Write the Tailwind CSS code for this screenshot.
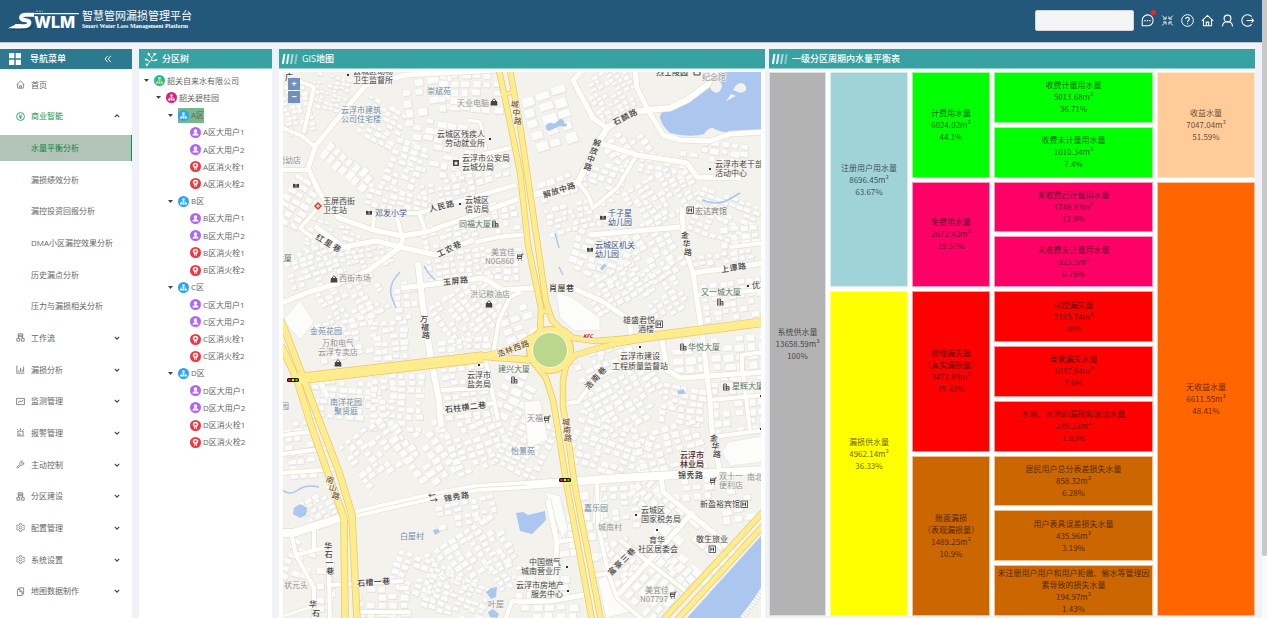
<!DOCTYPE html>
<html lang="zh-CN">
<head>
    <meta charset="UTF-8">
    <meta name="viewport" content="width=device-width, initial-scale=1.0">
    <title>智慧管网漏损管理平台</title>
    <script src="https://cdn.jsdelivr.net/npm/@tailwindcss/browser@4"></script>
</head>
<body class="flex h-screen overflow-hidden bg-[#f0f2f7] font-['Open_Sans','Noto_Sans_CJK_SC',sans-serif] text-[8px] leading-[12px] text-[#666]">

    <!-- icon set -->
    <svg class="hidden">
        <defs>
            <symbol id="i-home" viewBox="0 0 16 16"><path d="M1 8.5 8 1.8l7 6.7M3 7v7.5h10V7M6.5 14.5V10h3v4.5" fill="none" stroke="currentColor" stroke-width="1.3"/></symbol>
            <symbol id="i-money" viewBox="0 0 16 16"><circle cx="8" cy="8" r="7" fill="none" stroke="currentColor" stroke-width="1.4"/><path d="M5.5 4 8 7.500l2.500-3.500M5.500 8h5M5.500 10.200h5M8 8v4.500" fill="none" stroke="currentColor" stroke-width="1.1"/></symbol>
            <symbol id="i-flow" viewBox="0 0 16 16"><path d="M4 1.500h8v5H4zM4 4h8M4.500 6.500V9M11.500 6.500V9M1.500 9.500h5v5h-5zM9.500 9.500h5v5h-5z" fill="none" stroke="currentColor" stroke-width="1.3"/></symbol>
            <symbol id="i-bar" viewBox="0 0 16 16"><path d="M1.500 1v13.500H15M5 12V9M8 12V5M11 12V8M13.500 12V3" fill="none" stroke="currentColor" stroke-width="1.4"/></symbol>
            <symbol id="i-line" viewBox="0 0 16 16"><path d="M1 2.500h14v11H1zM3.500 10.500 6.500 7l2.500 2 4-4" fill="none" stroke="currentColor" stroke-width="1.3"/></symbol>
            <symbol id="i-alarm" viewBox="0 0 16 16"><path d="M3.500 13V5.500h9V13M1.500 14h13M8 .5v3M2 2l1.500 1.500M14 2l-1.500 1.500M7 9v4" fill="none" stroke="currentColor" stroke-width="1.400"/></symbol>
            <symbol id="i-tool" viewBox="0 0 16 16"><path d="M10 2a4 4 0 0 0-3 5.500L1.500 13l1.500 1.500L8.500 9A4 4 0 0 0 14 5l-2.500 1.500L9.500 5 12 2.200z" fill="none" stroke="currentColor" stroke-width="1.300"/></symbol>
            <symbol id="i-gear" viewBox="0 0 16 16"><path d="m6.500 1.200h3l.6 2 2 1.100 2-.5 1.400 2.500-1.400 1.700 1.400 1.800-1.400 2.500-2-.5-2 1.100-.6 2h-3l-.6-2-2-1.100-2 .5L.5 9.800 1.900 8 .5 6.300l1.400-2.500 2 .5 2-1.100z" fill="none" stroke="currentColor" stroke-width="1.200"/><circle cx="8" cy="8" r="2.500" fill="none" stroke="currentColor" stroke-width="1.200"/></symbol>
            <symbol id="i-copy" viewBox="0 0 16 16"><path d="M5 4V1.500h8.500v11H11M2.500 4.500H7l4 4v6.500H2.500zM7 4.500V8.500h4" fill="none" stroke="currentColor" stroke-width="1.300"/></symbol>
            <symbol id="i-down" viewBox="0 0 16 16"><path d="m2 5 6 6 6-6" fill="none" stroke="currentColor" stroke-width="3"/></symbol>
            <symbol id="i-up" viewBox="0 0 16 16"><path d="m2 11 6-6 6 6" fill="none" stroke="currentColor" stroke-width="3"/></symbol>
            <symbol id="i-org" viewBox="0 0 16 16"><circle cx="8" cy="8" r="8" fill="currentColor"/><path d="M8 6v3M4.500 11V8.700h7V11M8 9v2" fill="none" stroke="#fff" stroke-width="1"/><path d="M6.300 3.500h3.400v3H6.300zM3 10h3v2.500H3zM6.600 10h2.800v2.500H6.600zM10 10h3v2.500h-3z" fill="#fff"/></symbol>
            <symbol id="i-company" viewBox="0 0 16 16"><circle cx="8" cy="8" r="8" fill="currentColor"/><path d="M8 6v3M4.500 11V8.700h7V11M8 9v2" fill="none" stroke="#ffd83a" stroke-width="1"/><path d="M6 3h4v3.500H6zM3 10h3v2.800H3zM6.600 10h2.800v2.800H6.600zM10 10h3v2.800h-3z" fill="#ffd83a"/></symbol>
            <symbol id="i-user" viewBox="0 0 16 16"><circle cx="8" cy="8" r="8" fill="currentColor"/><path d="M5.500 5.700a2.500 2.500 0 0 1 5 0c0 2-1.200 3-2.500 3s-2.500-1-2.500-3zM3.500 12.500c0-2.500 2-3.300 4.500-3.300s4.500.8 4.500 3.300z" fill="#fff"/></symbol>
            <symbol id="i-hydrant" viewBox="0 0 16 16"><circle cx="8" cy="8" r="8" fill="currentColor"/><path d="M8 2.500c2.500 0 4 1.600 4 3.600 0 1.800-1.200 2.800-2 3.700v3H6v-3C5.200 8.900 4 7.900 4 6.100c0-2 1.500-3.600 4-3.600z" fill="#fff"/><circle cx="8" cy="6.500" r="1.600" fill="currentColor"/><path d="M8 10v3" stroke="currentColor" stroke-width="1"/></symbol>
            <symbol id="i-bars" viewBox="0 0 16 12"><path d="M2.500 1 .8 11" stroke="#fff" stroke-width="2"/><path d="M6.600 1 4.900 11" stroke="#fff" stroke-width="2" opacity=".85"/><path d="M10.700 1 9 11" stroke="#fff" stroke-width="2" opacity=".6"/><path d="M14.800 1 13.100 11" stroke="#fff" stroke-width="2" opacity=".4"/></symbol>
        </defs>
    </svg>

    <div class="flex min-w-0 flex-1 flex-col">
        <header class="flex h-[43px] shrink-0 items-center justify-between border-b border-[#b9c7d4] bg-[#24587a] px-2 pb-0.5">
            <div class="flex items-center gap-0.5 text-white">
                <svg class="h-[22px] w-[72px]" viewBox="0 0 72 22">
                    <path d="M1 20.500h17q6 0 7-5" fill="none" stroke="#153d58" stroke-width="1.500" opacity=".6"/>
                    <path d="M14 4h57v1.200H25z" fill="#fff"/>
                    <path d="M26 5.800H18q-4.500 0-5 2.700-.3 2.300 4.500 2.700 4.500.4 3.800 3-.8 3-5.300 3H7" fill="none" stroke="#fff" stroke-width="4"/>
                    <path d="M0 19.200 8 15.200h5v4z" fill="#fff"/>
                    <path d="M28 2.200h2M31 2.200h2M34 2.200h1" stroke="#fff" stroke-width=".8" opacity=".7"/>
                    <text x="26" y="19" font-size="16" font-weight="800" fill="#fff" font-family="Inter, sans-serif">WLM</text>
                </svg>
                <div class="flex flex-col">
                    <h1 class="text-[11px] leading-[12px]">智慧管网漏损管理平台</h1>
                    <p class="font-['Liberation_Serif',serif] text-[6px] font-bold leading-[8px]">Smart Water Loss Management Platform</p>
                </div>
            </div>
            <div class="flex items-center gap-[7px] text-white">
                <input type="search" aria-label="搜索" class="h-[21px] w-[99px] rounded-[2px] border border-[#cfd6dc] bg-[#f5f5f5] px-1 text-[#333] outline-none">
                <button class="relative" aria-label="消息">
                    <svg class="size-[13px]" viewBox="0 0 16 16"><path d="M1.500 14.500V8A6.700 6.700 0 1 1 8 14.500z" fill="none" stroke="currentColor" stroke-width="1.300"/><path d="M4.200 7.300h1.600v1.600H4.200zM7.200 7.300h1.600v1.600H7.200zM10.200 7.300h1.600v1.600h-1.600z" fill="currentColor"/></svg>
                    <span class="absolute -right-0.5 -top-1 size-[5px] rounded-full bg-[#f5222d]"></span>
                </button>
                <button aria-label="全屏"><svg class="size-[13px]" viewBox="0 0 16 16"><path d="m1.500 2 4 4M14.500 2l-4 4M1.500 14l4-4M14.500 14l-4-4M2.500 6.200h3.700V3M9.800 3v3.200h3.700M2.500 9.800h3.700V13M9.800 13V9.800h3.700" fill="none" stroke="currentColor" stroke-width="1.100"/></svg></button>
                <button aria-label="帮助"><svg class="size-[13px]" viewBox="0 0 16 16"><circle cx="8" cy="8" r="7.200" fill="none" stroke="currentColor" stroke-width="1.200"/><path d="M5.700 6.300C5.700 3.400 10.300 3.500 10.300 6.200 10.300 8 8 7.900 8 10M8 11.300v1.400" fill="none" stroke="currentColor" stroke-width="1.300"/></svg></button>
                <button aria-label="首页"><svg class="size-[13px]"><use href="#i-home"/></svg></button>
                <button aria-label="用户"><svg class="size-[13px]" viewBox="0 0 16 16"><circle cx="8" cy="5.500" r="4.200" fill="none" stroke="currentColor" stroke-width="1.400"/><path d="M1.800 15.300C2 11.500 4.500 9.600 8 9.600s6 1.900 6.200 5.700" fill="none" stroke="currentColor" stroke-width="1.400"/></svg></button>
                <button aria-label="退出"><svg class="size-[13px]" viewBox="0 0 16 16"><path d="M13.200 3.300a7 7 0 1 0 0 9.400M7 8h8.500M13 5.500 15.500 8 13 10.500" fill="none" stroke="currentColor" stroke-width="1.300"/></svg></button>
            </div>
        </header>

        <main class="flex min-h-0 flex-1 gap-[7px] pr-[7px] pt-[6px]">
            <!-- navigation -->
            <aside class="w-[132px] shrink-0 overflow-hidden bg-white">
                <div class="flex h-5 items-center bg-[#2c7a90] pl-[9px] text-white">
                    <svg class="size-3" viewBox="0 0 12 12"><path d="M0 0h5.300v5.300H0zM6.700 0H12v5.300H6.700zM0 6.700h5.300V12H0zM6.700 6.700H12V12H6.700z" fill="#fff"/></svg>
                    <h2 class="ml-[9px] flex-1 text-[9px] font-medium">导航菜单</h2>
                    <button class="mr-5" aria-label="收起菜单"><svg class="size-2" viewBox="0 0 8 8"><path d="M3.800.8 1 4l2.800 3.200M7 .8 4.200 4 7 7.200" fill="none" stroke="#fff" stroke-width=".9"/></svg></button>
                </div>
                <nav id="menu" class="grid h-[538px] auto-rows-fr"></nav>
            </aside>

            <!-- zone tree -->
            <section class="w-[133px] shrink-0 overflow-hidden bg-white">
                <div class="flex h-5 items-center border-b border-[#8fd0d0] bg-[#38a2a3] pl-[5px] text-white">
                    <svg class="h-4 w-[14px]" viewBox="0 0 14 16"><path d="M3 15c1-2 1.500-3 3-4.500S8 8 8 6.500L10 4M6 10.500 3 9M8 7 5 4M7 9l4 1" fill="none" stroke="#fff" stroke-width=".8"/><path d="M4 1.500 6.500 3 5.500 5 3.500 4zM9.500 2l3 .5L11 4.500 9.300 4zM.5 7.500l3 .5L4 9.500l-2.500 0zM10.500 8.500l3-.5-1 2-2 .3zM1.500 12.500l2.500.5-1.500 2.500z" fill="#fff"/></svg>
                    <h2 class="ml-1 text-[9px] font-medium">分区树</h2>
                </div>
                <ul id="tree" class="mt-[3px] grid h-[379px] auto-rows-fr"></ul>
            </section>

            <div class="grid min-w-0 flex-1 grid-cols-2 gap-1">
                <!-- map -->
                <section class="flex min-h-0 min-w-0 flex-col bg-white">
                    <div class="flex h-5 shrink-0 items-center gap-1 border-b border-[#8fd0d0] bg-[#38a2a3] pl-[3px] text-white">
                        <svg class="h-3 w-4"><use href="#i-bars"/></svg>
                        <h2 class="text-[9px] font-medium">GIS地图</h2>
                    </div>
                    <div class="relative mx-1 mt-[3px] min-h-0 flex-1 overflow-hidden bg-[#f4f2ed]">
                        <svg id="map" class="absolute inset-0 size-full" viewBox="283 72 478 546" preserveAspectRatio="xMidYMid slice">
                            <g id="buildings" stroke-width=".6"></g>
                            <g id="water" fill="#abc7ef">
                                <path d="M660 118Q660 112 667 108L687 101 707 89 716 72H762V130L733 133Q718 132 713 128 708 127 704 134 690 138 670 133 662 126 660 118z"/>
                                <path d="M546 125Q550 121 554 124L560 119Q565 119 564 123L567 124Q567 128 560 126L549 131Q545 130 546 125z"/>
                                <path d="M762 535 687 618H741L762 586z"/>
                                <path d="M516 513 523 512 528 515 545 511 546 520 532 534 520 531z"/>
                                <path d="M294 508 300 504 307 508 306 515 300 518 293 514z"/>
                                <path d="M433 530 438 529 440 532 435 535zM486 592 491 588 497 587 496 597 491 599zM488 612 493 609 499 614 497 618 490 617zM600 268 605 263 606 266 602 271zM677 391 684 389 685 394 678 394z"/>
                                <path d="M400 272Q387 285 392 298L396 308M424 266 429 274 435 280M555 233 559 248M559 267 563 275M702 200Q718 206 728 200L740 193M282 490Q290 496 298 490T319 487" fill="none" stroke="#abc7ef" stroke-width="1.500"/>
                                <path d="M714 92a6 6 0 1 1 8-5 14 14 0 0 0-2 4q-3 3-6 1zM733 90q4-8 9-7 5 2 4 7-3 4-8 2zM726 101l5-7 5 2z" fill="#f4f2ed"/>
                            </g>
                            <g id="streets" fill="none" stroke-linejoin="round"></g>
                            <circle cx="550" cy="350" r="24" fill="#e3c965"/>
                            <g id="avenues" fill="none" stroke-linejoin="round"></g>
                            <circle cx="550" cy="350" r="23" fill="#ffec8f"/>
                            <circle cx="550" cy="350" r="17.500" fill="#bbd78d" stroke="#fff9d8" stroke-width="1"/>
                            <g id="labels" font-family="Noto Sans CJK SC, sans-serif" font-size="8" paint-order="stroke" stroke="#f7f6f2" stroke-width="1.500" stroke-linejoin="round"></g>
                            <g id="pois"></g>
                        </svg>
                        <div class="absolute left-[5px] top-[6px] flex flex-col gap-px text-[9px] font-bold leading-[12px] text-white">
                            <button class="size-3 bg-[#7291ba]">+</button>
                            <button class="size-3 bg-[#7291ba]">−</button>
                        </div>
                    </div>
                </section>

                <!-- water balance -->
                <section class="min-w-0">
                    <div class="flex h-5 items-center gap-1 border-b border-[#8fd0d0] bg-[#38a2a3] pl-[3px] text-white">
                        <svg class="h-3 w-4"><use href="#i-bars"/></svg>
                        <h2 class="text-[9px] font-medium">一级分区周期内水量平衡表</h2>
                    </div>
                    <div class="overflow-hidden bg-white pt-[3px]">
                        <div class="-mx-1 -my-1">
                            <table class="h-[552px] w-full table-fixed border-separate border-spacing-1 text-center font-['Noto_Sans_CJK_SC',sans-serif] text-black/65 [text-spacing-trim:space-all] [&_td]:border [&_td]:border-white/60 [&_td]:p-0 [&_tr]:h-[50px]">
                                <colgroup>
                                    <col class="w-[57px]"><col class="w-[78px]"><col class="w-[78px]"><col class="w-[159px]"><col>
                                </colgroup>
                                <tbody>
                                    <tr>
                                        <td rowspan="10" class="bg-[#b3b3b3]">系统供水量<br>13658.59m³<br>100%</td>
                                        <td rowspan="4" class="bg-[#9fd3d8]">注册用户用水量<br>8696.45m³<br>63.67%</td>
                                        <td rowspan="2" class="bg-[#00ff00]">计费用水量<br>6024.02m³<br>44.1%</td>
                                        <td class="bg-[#00ff00]">收费计量用水量<br>5013.68m³<br>36.71%</td>
                                        <td rowspan="2" class="bg-[#ffcb99]">收益水量<br>7047.04m³<br>51.59%</td>
                                    </tr>
                                    <tr>
                                        <td class="bg-[#00ff00]">收费未计量用水量<br>1010.34m³<br>7.4%</td>
                                    </tr>
                                    <tr>
                                        <td rowspan="2" class="bg-[#ff0066]">免费用水量<br>2672.43m³<br>19.57%</td>
                                        <td class="bg-[#ff0066]">未收费已计量用水量<br>1748.93m³<br>12.8%</td>
                                        <td rowspan="8" class="bg-[#ff6600]">无收益水量<br>6611.55m³<br>48.41%</td>
                                    </tr>
                                    <tr>
                                        <td class="bg-[#ff0066]">未收费未计量用水量<br>923.5m³<br>6.76%</td>
                                    </tr>
                                    <tr>
                                        <td rowspan="6" class="bg-[#ffff00]">漏损供水量<br>4962.14m³<br>36.33%</td>
                                        <td rowspan="3" class="bg-[#ff0000]">物理漏失量<br>（真实漏损量）<br>3472.89m³<br>25.43%</td>
                                        <td class="bg-[#ff0000]">可控漏失量<br>2185.74m³<br>16%</td>
                                    </tr>
                                    <tr>
                                        <td class="bg-[#ff0000]">背景漏失水量<br>1037.84m³<br>7.6%</td>
                                    </tr>
                                    <tr>
                                        <td class="bg-[#ff0000]">水箱、水池的漏损和溢流水量<br>249.31m³<br>1.83%</td>
                                    </tr>
                                    <tr>
                                        <td rowspan="3" class="bg-[#cc6600]">账面漏损<br>（表观漏损量）<br>1489.25m³<br>10.9%</td>
                                        <td class="bg-[#cc6600]">居民用户总分表差损失水量<br>858.32m³<br>6.28%</td>
                                    </tr>
                                    <tr>
                                        <td class="bg-[#cc6600]">用户表具误差损失水量<br>435.96m³<br>3.19%</td>
                                    </tr>
                                    <tr>
                                        <td class="bg-[#cc6600]">未注册用户用户和用户拒缴、偷水等管理因素导致的损失水量<br>194.97m³<br>1.43%</td>
                                    </tr>
                                </tbody>
                            </table>
                        </div>
                    </div>
                </section>
            </div>
        </main>
    </div>

    <!-- page scroll track -->
    <div class="w-[5px] shrink-0 bg-[#fafafa]"><div class="h-[90%] rounded-b-[2px] bg-[#c9c9c9]"></div></div>

    <script>
        // ---------- navigation ----------
        const menu = [
            ['i-home', '首页'],
            ['i-money', '商业智能', 'open'],
            ['', '水量平衡分析', 'active'],
            ['', '漏损绩效分析'],
            ['', '漏控投资回报分析'],
            ['', 'DMA小区漏控效果分析'],
            ['', '历史漏点分析'],
            ['', '压力与漏损相关分析'],
            ['i-flow', '工作流', 'closed'],
            ['i-bar', '漏损分析', 'closed'],
            ['i-line', '监测管理', 'closed'],
            ['i-alarm', '报警管理', 'closed'],
            ['i-tool', '主动控制', 'closed'],
            ['i-flow', '分区建设', 'closed'],
            ['i-gear', '配置管理', 'closed'],
            ['i-gear', '系统设置', 'closed'],
            ['i-copy', '地图数据制作', 'closed'],
        ];
        document.getElementById('menu').innerHTML = menu.map(([icon, text, state]) => {
            const color = state === 'active' ? 'border-r border-[#0d9447] bg-[#b1c4b7] text-[#12813f]' :
                state === 'open' ? 'text-[#12914a]' : '';
            const arrow = state === 'open' ? 'i-up' : state === 'closed' ? 'i-down' : '';
            return `<a href="#" class="my-[3px] flex items-center pl-4 pr-3 ${color}">
                <span class="w-[15px] shrink-0">${icon ? `<svg class="size-[9px]"><use href="#${icon}"/></svg>` : ''}</span>
                <span class="flex-1 whitespace-nowrap">${text}</span>
                ${arrow ? `<svg class="size-[6px] text-[#444]"><use href="#${arrow}"/></svg>` : ''}</a>`;
        }).join('');

        // ---------- tree ----------
        const tree = [[0, 'i-company', '#12bdb9', '韶关自来水有限公司'], [1, 'i-org', '#d6217f', '韶关碧桂园']];
        for (const zone of ['A', 'B', 'C', 'D']) {
            tree.push([2, 'i-org', '#2fa4ee', zone + '区', zone === 'A']);
            for (const n of [1, 2]) tree.push([3, 'i-user', '#b265f5', `${zone}区大用户${n}`]);
            for (const n of [1, 2]) tree.push([3, 'i-hydrant', '#f5333f', `${zone}区消火栓${n}`]);
        }
        const indent = ['pl-[5px]', 'pl-[17px]', 'pl-[29px]', 'pl-[41px]'];
        document.getElementById('tree').innerHTML = tree.map(([level, icon, color, text, selected]) =>
            `<li class="flex items-center gap-[5px] ${indent[level]}">
                <span class="flex w-[5px] justify-center">${level < 3 ? '<svg class="h-[3px] w-[5px]" viewBox="0 0 5 3"><path d="M0 0h5L2.500 3z" fill="#444"/></svg>' : ''}</span>
                <button class="flex h-[15px] items-center gap-[2px] whitespace-nowrap ${selected ? 'bg-[#78b78c]' : ''}">
                    <svg class="size-[11px]" style="color:${color}"><use href="#${icon}"/></svg>${text}</button></li>`).join('');

        // ---------- map: buildings ----------
        let seed = 7;
        const rand = () => (seed = (seed * 16807) % 2147483647) / 2147483647;
        // centre x, centre y, width, height, angle, cell size
        const blocks = [
            [294, 108, 24, 50, -15, 7], [330, 92, 34, 36, 15, 6], [378, 120, 44, 40, 30, 8], [343, 165, 20, 50, -50, 11],
            [425, 100, 46, 46, -8, 13], [468, 92, 60, 40, 2, 11], [440, 145, 60, 50, 10, 11], [405, 165, 36, 50, 20, 9],
            [480, 170, 50, 26, -15, 9], [395, 200, 60, 24, 15, 8], [445, 190, 50, 22, -12, 8], [295, 200, 26, 50, 30, 10],
            [330, 238, 50, 34, 15, 7], [360, 255, 60, 24, -10, 7], [450, 230, 60, 20, -15, 8], [500, 215, 36, 30, -10, 9],
            [310, 268, 50, 40, -20, 8], [350, 300, 60, 44, -28, 8], [345, 335, 60, 34, -12, 9], [390, 340, 36, 40, -5, 9],
            [405, 300, 24, 40, -5, 9], [460, 262, 70, 26, -8, 8], [465, 312, 60, 50, -35, 8], [500, 262, 30, 30, 0, 9],
            [515, 325, 30, 36, -20, 12], [460, 345, 46, 14, -6, 9], [350, 400, 80, 40, 4, 9], [395, 400, 50, 56, 2, 9],
            [462, 390, 40, 50, -8, 9], [515, 395, 36, 50, 25, 12], [375, 450, 60, 50, -35, 9], [425, 450, 50, 60, -35, 11],
            [475, 440, 60, 60, -20, 9], [525, 445, 46, 60, 25, 8], [298, 450, 26, 60, -8, 10], [320, 505, 40, 26, -30, 8],
            [300, 560, 30, 40, 20, 10], [325, 585, 20, 50, 0, 10], [465, 512, 60, 26, -12, 9],
            [470, 555, 80, 50, -32, 9], [415, 575, 50, 40, 20, 9], [380, 600, 50, 30, 0, 11], [455, 595, 60, 40, 20, 8],
            [505, 570, 30, 34, -28, 8], [548, 115, 46, 50, -18, 16], [605, 95, 50, 46, -30, 7],
            [560, 185, 46, 20, -18, 10], [625, 145, 44, 30, -35, 9], [605, 170, 44, 30, 20, 9], [660, 165, 44, 24, 10, 8],
            [660, 195, 70, 44, -30, 8], [580, 215, 70, 30, -14, 8], [715, 150, 70, 20, 8, 10],
            [722, 215, 60, 44, 20, 8], [740, 240, 40, 30, -5, 10], [645, 255, 60, 60, -30, 9], [600, 255, 60, 40, 20, 10],
            [610, 290, 50, 34, -30, 8], [660, 290, 40, 50, -30, 8], [720, 260, 60, 16, -8, 8], [730, 298, 56, 36, -8, 9],
            [600, 360, 56, 22, -20, 9], [690, 355, 36, 34, -5, 12], [735, 350, 50, 30, -5, 12],
            [625, 400, 80, 50, -30, 9], [680, 405, 40, 40, 10, 9], [735, 385, 50, 20, 0, 9], [735, 415, 50, 30, -5, 12],
            [610, 445, 80, 50, 20, 9], [670, 450, 70, 50, -15, 10], [620, 505, 40, 40, -5, 10],
            [590, 530, 16, 80, -6, 14], [650, 505, 40, 50, -45, 10], [700, 485, 60, 20, -5, 11], [735, 510, 30, 26, -10, 12],
            [690, 545, 70, 50, 40, 16], [650, 580, 60, 50, -45, 11], [620, 560, 30, 40, -45, 9], [562, 530, 14, 50, -6, 12],
            [540, 585, 50, 20, 0, 11], [550, 610, 60, 14, 0, 12],
        ];
        let out = '';
        for (const [cx, cy, w, h, angle, cell] of blocks) {
            out += `<g transform="rotate(${angle} ${cx} ${cy})">`;
            for (let x = cx - w / 2; x < cx + w / 2; x += cell) {
                for (let y = cy - h / 2; y < cy + h / 2; y += cell * 0.75) {
                    if (rand() < 0.18) continue;
                    const bw = cell * (0.6 + rand() * 0.35), bh = cell * 0.75 * (0.6 + rand() * 0.3);
                    const bx = x + rand() * 2, by = y + rand() * 1.5;
                    out += `<rect x="${bx + 0.7}" y="${by + 0.9}" width="${bw}" height="${bh}" fill="#e0e0de"/>` +
                        `<rect x="${bx}" y="${by}" width="${bw}" height="${bh}" fill="#fcfcfb" stroke="#e9e8e5"/>`;
                }
            }
            out += '</g>';
        }
        // large single plots
        out += '<g fill="#fcfcfb" stroke="#e0e0de"><path d="M556 292 572 297 600 318V330L575 331 560 318z"/><path d="M283 320 300 300 314 322 300 340z"/><path d="M728 442 762 436V462L730 466 722 452z"/><path d="M545 492 560 496 568 530 562 538 552 510z"/><path d="M594 488 600 486 604 520 592 524z"/><path d="M606 575 616 598 630 612 606 618 598 580z"/><path d="M524 402 540 400 548 440 528 448z"/><path d="M322 378 330 396 326 400 312 372z"/></g>';
        document.getElementById('buildings').innerHTML = out;

        // ---------- map: roads ----------
        function roads(id, list, edge, fill) {
            const draw = (color, extra) => list.map(([w, d]) => `<path d="M${d}" stroke="${color}" stroke-width="${w + extra}"/>`).join('');
            document.getElementById(id).innerHTML = draw(edge, 1.4) + draw(fill, 0);
        }
        roads('streets', [
            [4, '283 128 302 136 315 147'], [4, '284 79 296 80 314 87 304 132'], [5, '496 70 406 75 366 85 343 112 316 145 308 168 319 192 339 218 373 230 402 236 426 232 466 218 518 199'],
            [4, '283 170 308 170'], [4, '318 208 300 228 312 237 350 249'], [4, '373 230 374 214 419 213 456 202 516 185'], [4, '419 213 425 230'],
            [4, '396 215 403 240'], [4, '455 162 488 153 510 148'], [3, '468 120 480 122 486 150'], [4, '476 242 498 237 530 234'],
            [5, '583 70 573 80 578 90 593 118 607 128'], [6, '533 195 563 188 578 182 597 145 607 128 633 112 648 110 670 108 687 100 707 85 716 70'],
            [5, '635 70 637 88 648 110 663 135 680 140 710 141 730 134 764 132'], [5, '600 143 637 155 687 163 697 177 740 178'],
            [4, '635 158 617 188 593 208 588 195 578 182'], [5, '590 235 680 227'], [5, '682 208 684 245 693 273 702 333 710 400 712 430 720 473'],
            [5, '693 273 764 263'], [4, '730 247 764 243'], [4, '697 295 764 290'], [5, '570 287 600 300 630 320 631 335'],
            [5, '662 340 667 370 680 378 764 372'], [4, '710 400 764 395'], [4, '742 373 742 355 764 352'], [4, '743 373 750 430'],
            [4, '567 403 578 402 597 377 620 368 663 367'], [5, '281 303 309 292 339 283 369 270 399 248 403 240'],
            [5, '315 226 343 247 376 241 400 247 436 255 473 240'], [6, '418 263 423 307 431 360 439 400 441 427'],
            [5, '401 288 443 283 483 278 503 290 533 288'], [4, '521 292 510 297 499 320 493 354'],
            [4, '441 390 489 388'], [4, '443 412 493 403'], [4, '486 362 498 420'], [4, '283 435 318 431'], [4, '283 454 327 448'], [4, '283 473 335 469'],
            [8, '281 533 293 533 343 517 376 509 433 496 476 488 526 485 620 478 764 470'],
            [4, '291 533 296 555 314 588 314 620'], [4, '314 527 314 551'], [4, '296 555 326 547'], [4, '328 542 330 620'], [4, '329 585 403 581'],
            [4, '356 612 410 612'], [3, '283 616 314 606'], [4, '597 482 598 525 608 572 617 598 643 620'], [4, '592 576 608 573'],
            [5, '661 477 663 492 720 538 728 550'], [5, '618 595 693 512'], [4, '620 540 687 592'], [5, '548 500 557 542 555 572'], [4, '557 542 575 539'],
            [5, '518 602 550 601 584 595'], [4, '713 437 764 430'], [4, '505 620 512 601 530 602'],
        ], '#e6e1cf', '#fffffd');
        document.getElementById('streets').insertAdjacentHTML('beforeend', '<path d="M348 516 376 509 433 496 476 488 526 485" stroke="#e6dfc4" stroke-width=".8"/>' +
            '<path d="M762 592 742 618" stroke="#ddd" stroke-width="5"/><path d="M762 592 742 618" stroke="#fff" stroke-width="4" stroke-dasharray="2 1"/>');
        roads('avenues', [
            [5, '499 70 512 132 520 172 528 245 541 308 540 334'], [5, '510 70 520 125 537 240 546 302 552 320 563 332'],
            [3, '501 95 514 92'], [4, '540 312 549 311'],
            [5, '562 329 573 338 596 341 633 338 764 322'], [8, '610 343 640 338 764 322'], [5, '566 366 575 355 603 347 640 338'],
            [10, '296 379 399 367 483 357'], [6, '480 356 505 358 530 360'], [5, '483 356 510 350 534 336'],
            [5, '537 367 546 378 553 400 558 430 567 487 592 620'], [5, '566 366 563 380 563 407 567 430 575 487 601 620'],
            [4, '567 483 575 482'],
            [6, '281 320 304 380 321 425 339 472 352 515 357 620'], [6, '281 345 297 380 311 425 326 468 344 518 345 620'],
            [5, '764 511 663 620'], [5, '764 525 677 620'],
        ], '#e3c965', '#ffec8f');

        // ---------- map: labels ----------
        const dark = '#444', blue = '#6f8ba3', navy = '#40558a', green = '#587562', gray = '#929292', brown = '#7a5a2c';
        const labels = [
            ['云城区动物', 353, 74, dark], ['卫生监督所', 353, 83, dark], ['崇斌苑', 427, 94, blue], ['天业电脑', 457, 106, gray],
            ['云浮市建筑', 341, 113, blue], ['公司住宅楼', 341, 122, blue], ['云城区残疾人', 437, 137, dark], ['劳动就业所', 445, 146, dark],
            ['云浮市公安局', 462, 161, dark], ['云城分局', 462, 170, dark], ['妇幼店', 277, 163, gray], ['玉屏西街', 323, 204, dark], ['卫生站', 323, 213, dark],
            ['邓发小学', 375, 216, navy], ['云城区', 465, 203, dark], ['信访局', 465, 212, dark], ['同福大厦', 459, 227, green],
            ['纪念馆', 702, 80, gray], ['云浮市老干部', 715, 167, dark], ['活动中心', 715, 176, dark], ['千子星', 608, 216, navy], ['幼儿园', 608, 225, navy],
            ['宏达宾馆', 695, 214, '#777'], ['大厦', 276, 261, green], ['西街市场', 339, 281, gray], ['美宜佳', 491, 255, gray], ['N0G860', 485, 264, gray],
            ['洪记粮油店', 470, 297, gray], ['金苑花园', 310, 334, blue], ['万和电气', 322, 346, gray], ['云浮专卖店', 318, 355, gray],
            ['云浮市', 467, 378, dark], ['盐务局', 467, 387, dark], ['建兴大厦', 498, 372, green], ['南洋花园', 330, 405, blue], ['聚贤庭', 334, 414, blue],
            ['云城区机关', 595, 248, navy], ['幼儿园', 595, 257, navy], ['又一城大厦', 701, 295, green], ['优享', 752, 288, dark],
            ['雄盛君悦', 623, 323, dark], ['酒楼', 638, 332, dark], ['云浮市建设', 620, 359, dark], ['工程质量监督站', 612, 369, dark],
            ['华悦大厦', 688, 350, green], ['星辉大厦', 732, 389, green], ['天福', 527, 421, gray], ['怡景苑', 511, 454, blue], ['园', 281, 409, blue],
            ['云浮市', 680, 458, '#4a2a2a', 500], ['林业局', 680, 467, '#4a2a2a', 500], ['双十一', 719, 479, gray], ['便利店', 719, 488, gray], ['南北', 747, 480, gray],
            ['新盈裕宾馆', 700, 507, dark], ['云城区', 641, 513, dark], ['国家税务局', 641, 522, dark], ['嘉乐园', 584, 511, blue], ['城南村', 598, 530, gray],
            ['育华', 649, 543, dark], ['社区居委会', 638, 552, dark], ['敬生旅业', 696, 542, dark], ['中国燃气', 529, 565, dark], ['城南营业厅', 521, 574, dark],
            ['云浮市房地产', 516, 588, dark], ['服务中心', 531, 597, dark], ['美宜佳', 645, 593, gray], ['N07797', 640, 602, gray],
            ['白屋村', 400, 539, blue], ['状元头', 284, 588, gray], ['叶屋', 488, 607, gray],
        ];
        // road names run from one point to another, one character at a time
        const roadNames = [
            ['城中路', 515, 104, 518, 121, 8, brown], ['石麟路', 617, 121, 633, 113, -27, dark], ['解放中路', 597, 143, 588, 167, 18, dark], ['解放中路', 547, 194, 571, 186, -16, dark],
            ['人民路', 433, 208, 450, 204, -14, dark], ['红星巷', 320, 238, 337, 248, 32, dark], ['工农巷', 441, 253, 457, 245, -24, dark], ['玉屏路', 447, 282, 464, 280, -5, dark],
            ['万福路', 424, 319, 426, 335, 5, dark], ['肖屋巷', 553, 288, 570, 288, 0, dark], ['浩林西路', 501, 353, 525, 344, -20, brown], ['浩南巷', 589, 385, 602, 371, -45, dark],
            ['金华路', 685, 235, 688, 252, 5, dark], ['上谭路', 725, 269, 742, 266, -6, dark], ['石柱横二巷', 449, 409, 482, 405, -6, dark],
            ['城南路', 566, 422, 568, 438, 6, brown], ['南山路', 330, 480, 336, 496, 18, brown], ['锦秀路', 448, 498, 465, 495, -6, dark], ['锦秀路', 682, 475, 699, 475, 0, dark],
            ['金华路', 714, 438, 717, 454, 5, dark], ['华石一巷', 328, 546, 330, 571, 2, dark], ['石槽一巷', 361, 583, 386, 581, -3, dark], ['华石', 313, 604, 316, 613, 5, dark],
            ['富豪三巷', 612, 571, 631, 552, -45, dark], ['广', 289, 77, 289, 77, 0, dark], ['→', 434, 500, 434, 500, -6, dark], ['←', 432, 495, 432, 495, -6, dark],
        ];
        document.getElementById('labels').innerHTML =
            labels.map(([t, x, y, c, w]) => `<text x="${x}" y="${y}" fill="${c}" font-weight="${w || 400}">${t}</text>`).join('') +
            roadNames.map(([t, x1, y1, x2, y2, r, c]) => [...t].map((ch, i) => {
                const k = t.length > 1 ? i / (t.length - 1) : 0, x = x1 + (x2 - x1) * k, y = y1 + (y2 - y1) * k;
                return `<text x="${x}" y="${y + 3}" text-anchor="middle" transform="rotate(${r} ${x} ${y})" fill="${c}" font-weight="500">${ch}</text>`;
            }).join('')).join('') +
            '<text x="583" y="338" fill="#e02020" font-size="5" font-weight="900" font-style="italic">KFC</text>';

        // ---------- map: points of interest ----------
        const dots = [[348, 75], [490, 139], [460, 204], [710, 169], [479, 365], [640, 347], [748, 286], [636, 515], [657, 530], [567, 567], [568, 591], [761, 396], [761, 429]];
        const hotels = [[690, 210], [659, 324], [744, 504], [712, 549]];
        const towers = [[495, 224], [514, 380], [720, 302], [683, 347], [726, 387]];
        const shops = [[494, 102], [334, 279], [489, 304], [338, 363]];
        const carts = [[520, 257], [547, 419], [713, 481], [673, 595]];
        const books = [[369, 213], [603, 218], [590, 250], [296, 186]];
        const lights = [[293, 380], [565, 480]];
        document.getElementById('pois').innerHTML =
            dots.map(([x, y]) => `<rect x="${x - 1}" y="${y - 1}" width="2" height="2" fill="#333"/>`).join('') +
            hotels.map(([x, y]) => `<rect x="${x - 3}" y="${y - 3}" width="6.500" height="6.500" fill="#fff" stroke="#555" stroke-width=".9"/><path d="M${x - 1.200} ${y - 1.700}v4M${x + 1.500} ${y - 1.700}v4M${x - 1} ${y}h2.500" stroke="#444" stroke-width="1"/>`).join('') +
            towers.map(([x, y]) => `<path d="M${x - 2.500} ${y + 3}v-6h3v6M${x - 2.500} ${y - 1}h3M${x - 2.500} ${y + 1}h3M${x + .500} ${y - .500}h2.500V${y + 3}M${x + .500} ${y + 1.200}h2.500M${x - 3} ${y + 3}h6.500" fill="none" stroke="#444" stroke-width=".8"/>`).join('') +
            shops.map(([x, y]) => `<path d="M${x - 3} ${y - 1}h6l.5 4.500h-7z" fill="#444"/><path d="M${x - 1.500} ${y}v-2q1.500-2.500 3 0v2" fill="none" stroke="#444" stroke-width=".9"/>`).join('') +
            carts.map(([x, y]) => `<path d="M${x + 3.500} ${y - 3}h-1.500l-.5 4.500h-4M${x - 3} ${y - 2}h5M${x - 2.500} ${y - .500}h4.500M${x - 2.500} ${y - 2}v3.500M${x - 2} ${y + 3}h1M${x + 1} ${y + 3}h1" fill="none" stroke="#444" stroke-width=".9"/>`).join('') +
            books.map(([x, y]) => `<path d="M${x - 3} ${y - 2}q1.500-.5 2.700.3v3.700q-1.200-.8-2.700-.3zM${x + 3} ${y - 2}q-1.500-.5-2.700.3v3.700q1.200-.8 2.700-.3z" fill="#444"/>`).join('') +
            lights.map(([x, y]) => `<rect x="${x - 6}" y="${y - 2}" width="12" height="4" rx="1.500" fill="#111"/><circle cx="${x - 3.500}" cy="${y}" r="1.300" fill="#f22"/><circle cx="${x}" cy="${y}" r="1.300" fill="#fd2"/><circle cx="${x + 3.500}" cy="${y}" r="1.300" fill="#2d2"/>`).join('') +
            '<rect x="453" y="160" width="6" height="6" fill="#444"/><path d="m456 161 .7 1.500 1.600.1-1.200 1 .4 1.600-1.500-.9-1.500.9.4-1.600-1.200-1 1.600-.1z" fill="#fff"/>' +
            '<path d="m318 202 4 4-4 4-4-4z" fill="#e3342f"/><path d="M318 204.200v3.600M316.200 206h3.600" stroke="#fff" stroke-width="1.200"/>' +
            '<text x="656" y="75" font-size="8" fill="#2f5a35" font-weight="500">烈士陵园</text><path d="M694 71h6v4h-6z" fill="none" stroke="#444"/>';
    </script>
</body>
</html>
